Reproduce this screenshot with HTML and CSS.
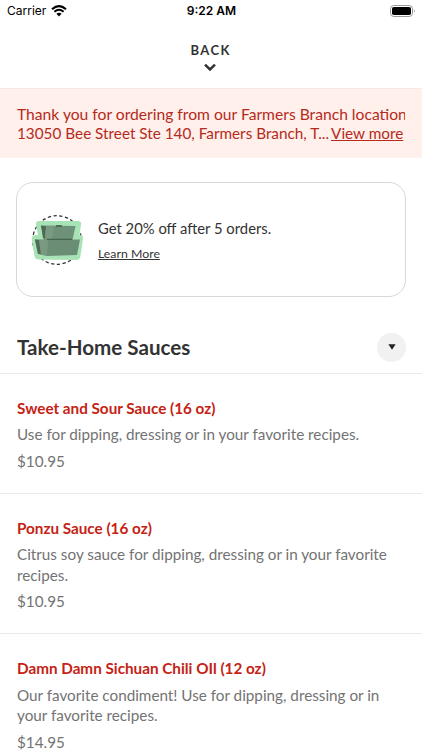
FILE: index.html
```
<!DOCTYPE html>
<html lang="en">
<head>
<meta charset="utf-8">
<title>Take-Home Sauces</title>
<link rel="stylesheet" href="styles.css">
</head>
<body>
<div class="status">
  <div class="carrier"><span>Carrier</span>
    <svg width="16" height="12" viewBox="0 0 16 12"><path d="M1 4.2Q8-2 15 4.2" fill="none" stroke="#000" stroke-width="2.1"/><path d="M3.4 6.8Q8 2.8 12.6 6.8" fill="none" stroke="#000" stroke-width="2"/><path d="M5.4 8.8Q8 6.7 10.6 8.8L8 11.4Z"/></svg>
  </div>
  <div class="time">9:22 AM</div>
  <svg class="battery" width="26" height="12" viewBox="0 0 26 12"><rect x=".5" y=".5" width="22" height="11" rx="3.3" fill="#fff" stroke="#999"/><rect x="2" y="2" width="19" height="8" rx="1.8"/><path d="M24 4Q25.4 6 24 8Z" fill="#888"/></svg>
</div>
<header class="header">
  <div class="back">BACK</div>
  <svg width="14" height="9" viewBox="0 0 14 9"><path d="M2 1.7L7 6.5L12 1.7" fill="none" stroke="#333" stroke-width="2.5"/></svg>
</header>
<div class="banner">
  <div class="line greeting">Thank you for ordering from our Farmers Branch location</div>
  <div class="line"><span class="address">13050 Bee Street Ste 140, Farmers Branch, T...</span><a class="more">View more</a></div>
</div>
<section class="card">
  <svg width="54" height="54" viewBox="0 0 54 54">
    <circle cx="27" cy="27" r="24.3" fill="none" stroke="#333" stroke-width="1.3" stroke-dasharray="3.3 2.5"/>
    <path d="M9 8H48Q51.500 8 51 11.500L49.500 22H50Q53.500 22 53 25.500L50.500 43Q50 47 46 47L9 46.500Q5 46.500 4.500 43L1.700 26Q1.500 22.500 5 22H8L6 12Q5.500 8 9 8Z" fill="#a8e3b5"/>
    <path d="M11 12.500L45.500 13L42.500 27H14Z" fill="#6e917a"/>
    <path d="M11 12.500L16 13.500L15 26L13 25Z" fill="#4f6955"/>
    <path d="M16 13.500L24 12.500L22 27L15 26Z" fill="#7a9b82"/>
    <path d="M26 12.300H32V13.500H26Z" fill="#30483a"/>
    <path d="M5 26.500H50L47 42L17 43L8 41Z" fill="#6c8d75"/>
    <path d="M5 26.500L9 27L11 41L8 41Z" fill="#506b56"/>
    <path d="M9 27L18 26.500L17 43L11 41Z" fill="#7a9a7f"/>
    <path d="M17 26.300H42" stroke="#3e5b48" stroke-width="1"/>
  </svg>
  <div class="offer"><div class="deal">Get 20% off after 5 orders.</div><a class="learn">Learn More</a></div>
</section>
<div class="heading">
  <h1>Take-Home Sauces</h1>
  <div class="toggle"><svg width="8" height="6" viewBox="0 0 8 6"><path d="M.4.300H7.600L4 5.700Z" fill="#222"/></svg></div>
</div>
<main>
  <article><h2>Sweet and Sour Sauce (16 oz)</h2><p>Use for dipping, dressing or in your favorite recipes.</p><div class="price">$10.95</div></article>
  <article><h2>Ponzu Sauce (16 oz)</h2><p>Citrus soy sauce for dipping, dressing or in your favorite<br>recipes.</p><div class="price">$10.95</div></article>
  <article><h2>Damn Damn Sichuan Chili OIl (12 oz)</h2><p>Our favorite condiment! Use for dipping, dressing or in<br>your favorite recipes.</p><div class="price">$14.95</div></article>
</main>
</body>
</html>
```
FILE: styles.css
```
* { box-sizing: border-box; }
body { margin: 0; height: 750px; overflow: hidden; background: #fff; color: #333; font-family: Lato, sans-serif; white-space: nowrap; }
svg { display: block; flex: none; }
.status { display: grid; grid-template-columns: 1fr auto 1fr; align-items: center; height: 22px; padding: 0 6px 0 7px; color: #000; font: 12px/16px Inter, sans-serif; }
.carrier { display: flex; align-items: center; gap: 5px; }
.time { font-weight: 600; }
.battery { justify-self: end; }
.header { height: 66px; display: flex; flex-direction: column; align-items: center; padding: 20px 2px 0 0; }
.back { font-size: 13px; line-height: 16px; font-weight: 700; letter-spacing: 1.4px; margin: 0 -1.4px 5px 0; }
.banner { height: 70px; background: #fff0eb; border-top: 1px solid #f5e9e4; padding: 16px 17px 0; color: #b52a1c; font-size: 15.3px; line-height: 18.5px; }
.line { display: flex; overflow: hidden; }
.greeting { font-size: 15.65px; }
.more { margin-left: 2px; text-decoration: underline; }
.card { margin: 24px 16px 0; height: 115px; border: 1px solid #d8d8d8; border-radius: 17px; display: flex; align-items: center; padding: 0 13px; gap: 14px; }
.offer { padding-top: 1px; }
.deal { font-size: 14.8px; line-height: 20px; }
.learn { display: block; margin-top: 7px; font-size: 12.3px; line-height: 18px; text-decoration: underline; }
.heading { height: 77px; border-bottom: 1px solid #e9e9e9; padding: 24px 16px 0 17px; display: flex; justify-content: space-between; align-items: center; }
h1 { margin: 0; font-size: 20.6px; line-height: 28px; font-weight: 700; }
.toggle { width: 29px; height: 29px; border-radius: 50%; background: #f1f1f1; display: grid; place-items: center; }
article { border-bottom: 1px solid #e9e9e9; padding: 24px 17px 21.6px; color: #737373; font-size: 15.25px; line-height: 20.5px; }
h2 { margin: 0 0 5.9px; color: #c52214; font-size: 15.25px; line-height: 20.5px; font-weight: 700; }
p { margin: 0 0 6px; }
```
